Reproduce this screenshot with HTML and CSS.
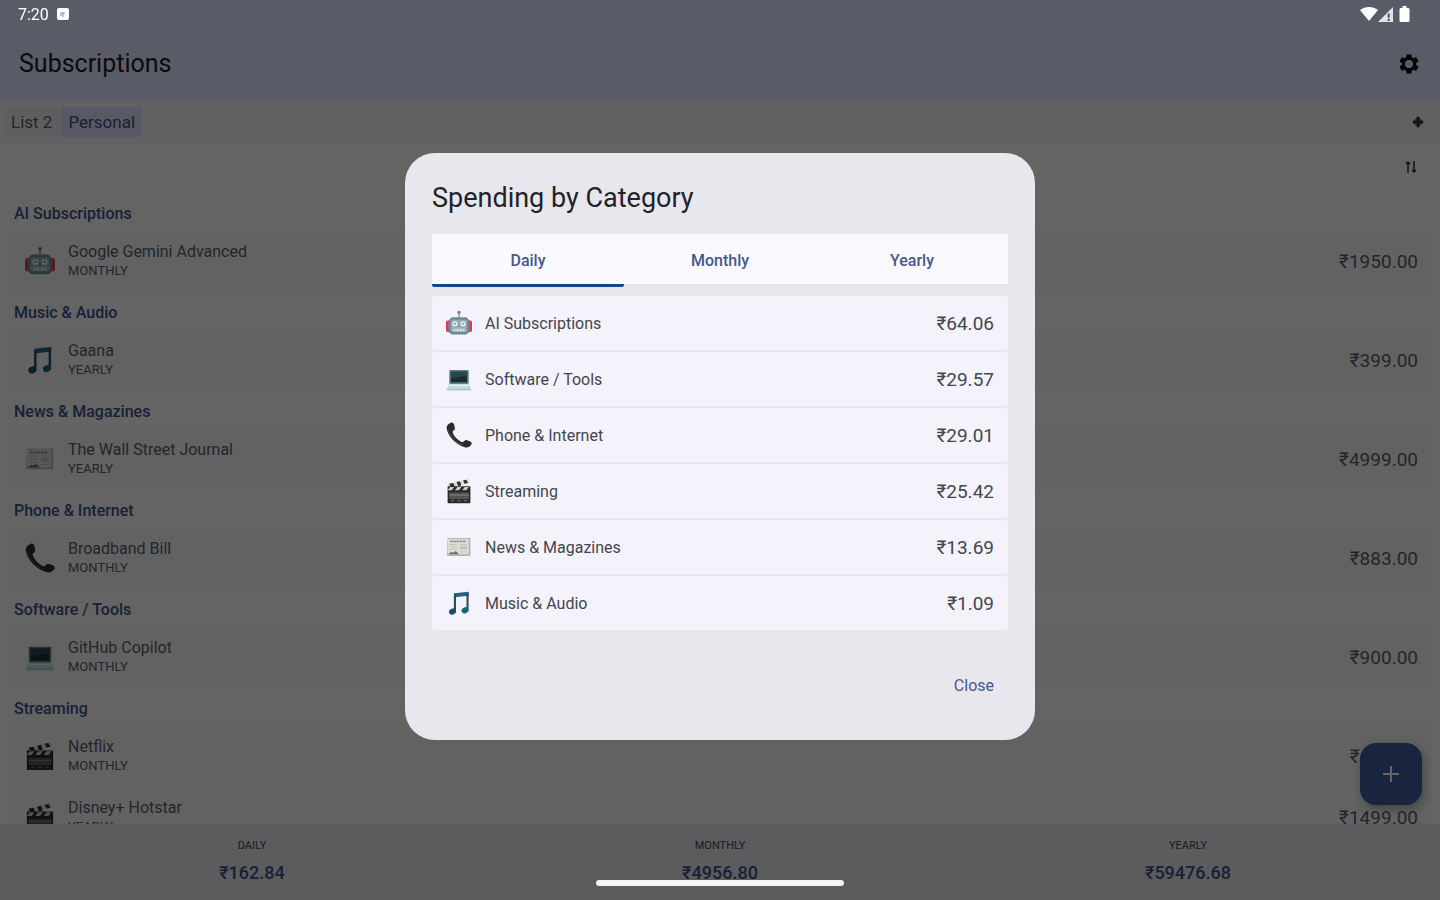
FILE: index.html
```html
<!DOCTYPE html>
<html lang="en">
<head>
    <meta charset="utf-8">
    <title>Subscriptions</title>
    <link rel="stylesheet" href="styles.css">
</head>
<body>
<!-- category icons -->
<svg class="sprite" aria-hidden="true">
    <symbol id="robot" viewBox="0 0 32 32">
        <circle cx="16" cy="3" r="2" fill="#a8685f"/>
        <path d="M16 3v7" stroke="#78909c" stroke-width="1.6"/>
        <rect x="0" y="13" width="6" height="14" rx="2" fill="#e5394b"/>
        <rect x="26" y="13" width="6" height="14" rx="2" fill="#e5394b"/>
        <path d="M7 9h18l4 4v14l-4 3H7l-4-3V13z" fill="#6f8a94"/>
        <rect x="6" y="12" width="20" height="15" rx="2" fill="#96adb5"/>
        <rect x="8" y="14" width="6" height="6" rx="2" fill="#e8f0f4"/>
        <rect x="18" y="14" width="6" height="6" rx="2" fill="#e8f0f4"/>
        <circle cx="11" cy="17" r="1.200" fill="#78929b"/>
        <circle cx="21" cy="17" r="1.200" fill="#78929b"/>
        <path d="M16 18l-1.500 3h3z" fill="#b77"/>
        <rect x="9" y="23" width="14" height="3" rx="1" fill="#dde7ea"/>
        <path d="M12 23v3M16 23v3M20 23v3" stroke="#78929b" stroke-width=".7"/>
    </symbol>
    <symbol id="music" viewBox="0 0 32 32">
        <path d="M10 4L28 2v5L10 9z" fill="#1f6484"/>
        <path d="M11 5v20M26.500 4v20" stroke="#285064" stroke-width="2.600" fill="none"/>
        <ellipse cx="8" cy="26.500" rx="4.500" ry="3.600" fill="#1c4f66" transform="rotate(-25 8 26.500)"/>
        <ellipse cx="23.500" cy="25" rx="4.500" ry="3.600" fill="#1e6470" transform="rotate(-25 23.500 25)"/>
    </symbol>
    <symbol id="news" viewBox="0 0 32 32">
        <path d="M2 5h28v22H4l-3-1z" fill="#b4b4b0"/>
        <path d="M2 6h26v19H2z" fill="#deded9"/>
        <path d="M5 9h20" stroke="#8d8d8a" stroke-width="2" stroke-dasharray="3 1"/>
        <path d="M4 13h10M4 16h10M4 19h9M17 13h9M17 22h9" stroke="#bbb" stroke-width="1"/>
        <path d="M17 15h9v4h-9z" fill="#c2c2be"/>
        <path d="M3 25l3-3 3 1 3-2 4 4z" fill="#6c6c6a"/>
    </symbol>
    <symbol id="phone" viewBox="0 0 32 32">
        <path d="M6 1c2-1 3 0 4 2l1 5c0 2-2 2-3 4 1 5 7 11 12 13 2-1 3-3 5-3l5 2c2 1 2 3 1 4-2 3-5 4-8 3C12 28 3 18 1 9 0 5 3 2 6 1z" fill="#2b2b2c"/>
        <path d="M3 10c2 8 10 16 18 18" fill="none" stroke="#555" stroke-width="1"/>
    </symbol>
    <symbol id="laptop" viewBox="0 0 32 32">
        <rect x="4" y="5" width="24" height="17" rx="1" fill="#578087"/>
        <rect x="6" y="7" width="20" height="13" fill="#1d2a30"/>
        <path d="M6 7h20v5L6 15z" fill="#28454b"/>
        <path d="M4 22h24l3 6H1z" fill="#c5d7de"/>
        <path d="M5 24h22" stroke="#edf3f5" stroke-width="1.500"/>
        <path d="M1 28h30v2H1z" fill="#a6c0c9"/>
    </symbol>
    <symbol id="clapper" viewBox="0 0 32 32">
        <path d="M2 8L28 1l1 5L3 13z" fill="#ddd"/>
        <path d="M4 7l5-1 2 5-5 1zM13 5l4-1 2 5-4 1zM21 3l4-1 2 4-4 1z" fill="#2e2e2e"/>
        <rect x="2" y="10" width="28" height="21" rx="1" fill="#2b2b2b"/>
        <path d="M5 11h5l-3 4H2zM14 11h5l-3 4h-5zM23 11h5l-3 4h-5z" fill="#ccc"/>
        <rect x="4" y="18" width="24" height="8" fill="#555"/>
        <path d="M4 21h24M6 28h4M14 28h4M22 28h4" stroke="#888" stroke-width="1"/>
    </symbol>
</svg>

<div class="screen">
    <header class="app-bar">
        <h1>Subscriptions</h1>
        <button class="icon-button" aria-label="Settings">
            <svg width="24" height="24" viewBox="0 0 24 24"><path fill="currentColor" d="M19.140 12.940c.04-.3.06-.61.06-.94s-.02-.64-.07-.94l2.030-1.580a.49.49 0 0 0 .12-.61l-1.920-3.320a.49.49 0 0 0-.59-.22l-2.390.96a7 7 0 0 0-1.620-.94l-.36-2.540a.48.48 0 0 0-.48-.41h-3.840a.48.48 0 0 0-.47.41l-.36 2.540c-.59.24-1.130.57-1.620.94l-2.390-.96a.49.49 0 0 0-.59.22L2.740 8.870a.48.48 0 0 0 .12.61l2.030 1.580c-.05.3-.09.63-.09.94s.02.64.07.94l-2.030 1.580a.49.49 0 0 0-.12.61l1.920 3.320c.12.22.37.29.59.22l2.390-.96c.5.38 1.030.7 1.620.94l.36 2.540c.05.24.24.41.48.41h3.840c.24 0 .44-.17.47-.41l.36-2.540c.59-.24 1.130-.56 1.620-.94l2.390.96c.22.08.47 0 .59-.22l1.920-3.320a.48.48 0 0 0-.12-.61zM12 16a4 4 0 1 1 0-8 4 4 0 0 1 0 8z"/></svg>
        </button>
    </header>

    <nav class="list-bar">
        <button class="chip">List 2</button>
        <button class="chip selected">Personal</button>
        <button class="icon-button add-list" aria-label="Add list">
            <svg width="12" height="12" viewBox="0 0 12 12"><path d="M6 0l6 6-6 6-6-6z" fill="#77777c"/><path d="M6 1v10M1 6h10" stroke="currentColor" stroke-width="2.500"/></svg>
        </button>
    </nav>

    <div class="sort-row">
        <button class="icon-button" aria-label="Sort">
            <svg width="12" height="14" viewBox="0 0 12 14"><path d="M3 13V2M1 4l2-2 2 2M9 1v11M7 10l2 2 2-2" fill="none" stroke="currentColor" stroke-width="1.500"/></svg>
        </button>
    </div>

    <main class="subscriptions">
        <h2>AI Subscriptions</h2>
        <div class="card">
            <svg class="emoji"><use href="#robot"/></svg>
            <div class="info"><span class="name">Google Gemini Advanced</span><span class="period">MONTHLY</span></div>
            <span class="amount">₹1950.00</span>
        </div>
        <h2>Music &amp; Audio</h2>
        <div class="card">
            <svg class="emoji"><use href="#music"/></svg>
            <div class="info"><span class="name">Gaana</span><span class="period">YEARLY</span></div>
            <span class="amount">₹399.00</span>
        </div>
        <h2>News &amp; Magazines</h2>
        <div class="card">
            <svg class="emoji"><use href="#news"/></svg>
            <div class="info"><span class="name">The Wall Street Journal</span><span class="period">YEARLY</span></div>
            <span class="amount">₹4999.00</span>
        </div>
        <h2>Phone &amp; Internet</h2>
        <div class="card">
            <svg class="emoji"><use href="#phone"/></svg>
            <div class="info"><span class="name">Broadband Bill</span><span class="period">MONTHLY</span></div>
            <span class="amount">₹883.00</span>
        </div>
        <h2>Software / Tools</h2>
        <div class="card">
            <svg class="emoji"><use href="#laptop"/></svg>
            <div class="info"><span class="name">GitHub Copilot</span><span class="period">MONTHLY</span></div>
            <span class="amount">₹900.00</span>
        </div>
        <h2>Streaming</h2>
        <div class="card">
            <svg class="emoji"><use href="#clapper"/></svg>
            <div class="info"><span class="name">Netflix</span><span class="period">MONTHLY</span></div>
            <span class="amount">₹649.00</span>
        </div>
        <div class="card">
            <svg class="emoji"><use href="#clapper"/></svg>
            <div class="info"><span class="name">Disney+ Hotstar</span><span class="period">YEARLY</span></div>
            <span class="amount">₹1499.00</span>
        </div>
    </main>

    <footer class="totals">
        <div class="total"><span class="label">DAILY</span><span class="value">₹162.84</span></div>
        <div class="total"><span class="label">MONTHLY</span><span class="value">₹4956.80</span></div>
        <div class="total"><span class="label">YEARLY</span><span class="value">₹59476.68</span></div>
    </footer>

    <button class="fab" aria-label="Add subscription">
        <svg width="18" height="18" viewBox="0 0 18 18"><path d="M9 1v16M1 9h16" stroke="currentColor" stroke-width="2"/></svg>
    </button>
</div>

<div class="scrim">
    <section class="dialog" role="dialog" aria-labelledby="dialog-title">
        <h2 id="dialog-title">Spending by Category</h2>
        <div class="tabs" role="tablist">
            <button class="tab active" role="tab" aria-selected="true">Daily</button>
            <button class="tab" role="tab" aria-selected="false">Monthly</button>
            <button class="tab" role="tab" aria-selected="false">Yearly</button>
        </div>
        <ul class="categories">
            <li><svg class="emoji"><use href="#robot"/></svg><span class="category">AI Subscriptions</span><span class="amount">₹64.06</span></li>
            <li><svg class="emoji"><use href="#laptop"/></svg><span class="category">Software / Tools</span><span class="amount">₹29.57</span></li>
            <li><svg class="emoji"><use href="#phone"/></svg><span class="category">Phone &amp; Internet</span><span class="amount">₹29.01</span></li>
            <li><svg class="emoji"><use href="#clapper"/></svg><span class="category">Streaming</span><span class="amount">₹25.42</span></li>
            <li><svg class="emoji"><use href="#news"/></svg><span class="category">News &amp; Magazines</span><span class="amount">₹13.69</span></li>
            <li><svg class="emoji"><use href="#music"/></svg><span class="category">Music &amp; Audio</span><span class="amount">₹1.09</span></li>
        </ul>
        <div class="actions">
            <button class="close">Close</button>
        </div>
    </section>
</div>

<!-- system bars stay above the scrim -->
<div class="status-bar">
    <span class="clock">7:20</span>
    <svg width="12" height="12" viewBox="0 0 12 12"><rect width="12" height="12" rx="2" fill="#fff"/><path d="M4 8V5h4M6 4v5" stroke="#999ba6" stroke-width="1.200" fill="none"/></svg>
    <svg class="wifi" width="18" height="14" viewBox="0 0 18 14"><path d="M0 3c5-4 13-4 18 0L9 14z" fill="#fff"/></svg>
    <svg width="15" height="15" viewBox="0 0 14 14"><path d="M14 0v14H0z" fill="#e4e4e8"/><path d="M10 6v4M10 11v2" stroke="#595b67" stroke-width="2"/></svg>
    <svg class="battery" width="11" height="16" viewBox="0 0 10 16"><path d="M3 0h4v2h2l1 1v12l-1 1H1l-1-1V3l1-1h2z" fill="#fff"/></svg>
</div>
<div class="nav-handle"></div>
</body>
</html>
```
FILE: styles.css
```css
* {
    box-sizing: border-box;
}

body {
    margin: 0;
    font-family: Roboto, "Noto Sans", sans-serif;
    color: #44464f;
}

h1, h2, ul {
    margin: 0;
    padding: 0;
    font-weight: 400;
}

button {
    border: none;
    padding: 0;
    background: none;
    font: inherit;
    color: inherit;
    cursor: pointer;
}

svg {
    display: block;
    flex-shrink: 0;
}

.sprite {
    position: absolute;
    width: 0;
    height: 0;
}

.screen {
    display: flex;
    flex-direction: column;
    height: 100vh;
    overflow: hidden;
    background: #f9f9fc;
}

/* top bars */
.app-bar {
    display: flex;
    flex-shrink: 0;
    align-items: center;
    justify-content: space-between;
    height: 100px;
    padding: 27px 19px 0;
    background: #dfe3ff;
}

.app-bar h1 {
    font-size: 25px;
    color: #1a1b21;
}

.icon-button {
    display: flex;
    color: #333;
}

.app-bar .icon-button {
    color: #000;
}

.list-bar {
    display: flex;
    flex-shrink: 0;
    align-items: center;
    gap: 2px;
    height: 44px;
    padding: 0 16px 0 4px;
    background: #f3f2f9;
}

.chip {
    height: 30px;
    padding: 0 7px;
    border-radius: 2px;
    background: #ecebee;
    font-size: 17px;
    color: #5c5e66;
}

.chip.selected {
    background: #d9e0fc;
    color: #3c5286;
}

.add-list {
    margin-left: auto;
}

.sort-row {
    display: flex;
    flex-shrink: 0;
    justify-content: flex-end;
    height: 49px;
    padding: 16px 23px 0;
}

/* list */
.subscriptions {
    flex: 1;
    min-height: 0;
    overflow: hidden;
    padding: 0 8px;
}

.subscriptions h2 {
    padding: 4px 6px 0;
    font-size: 16px;
    font-weight: 500;
    line-height: 34px;
    color: #3c5286;
}

.card {
    display: flex;
    align-items: center;
    gap: 13px;
    height: 60px;
    margin-bottom: 1px;
    padding: 0 14px 0 17px;
    border-radius: 4px;
    background: #f4f4f7;
    color: #5c5e66;
}

.emoji {
    width: 30px;
    height: 30px;
}

.info {
    display: flex;
    flex: 1;
    flex-direction: column;
}

.name {
    font-size: 16px;
    line-height: 20px;
}

.period {
    font-size: 13px;
    line-height: 18px;
}

.amount {
    font-size: 19px;
}

/* bottom totals */
.totals {
    display: flex;
    flex-shrink: 0;
    height: 76px;
    padding: 14px 18px 0;
    background: #e5e4ec;
}

.total {
    display: flex;
    flex: 1;
    flex-direction: column;
    align-items: center;
}

.label {
    font-size: 11px;
    line-height: 16px;
}

.value {
    font-size: 18px;
    font-weight: 500;
    line-height: 38px;
    color: #3c5286;
}

.fab {
    position: fixed;
    right: 18px;
    bottom: 95px;
    display: flex;
    align-items: center;
    justify-content: center;
    width: 62px;
    height: 62px;
    border-radius: 16px;
    background: #405c9c;
    color: #fff;
    box-shadow: 2px 4px 8px rgba(0, 0, 0, 0.3);
}

/* dialog */
.scrim {
    position: fixed;
    inset: 0;
    display: flex;
    align-items: center;
    justify-content: center;
    padding-bottom: 7px;
    background: rgba(0, 0, 0, 0.6);
}

.dialog {
    width: 630px;
    max-width: 90%;
    padding: 27px 27px 37px;
    border-radius: 30px;
    background: #e8e7ee;
}

.dialog h2 {
    font-size: 27px;
    line-height: 36px;
    color: #222329;
}

.tabs {
    display: flex;
    margin: 18px 0 9px;
    background: #faf9ff;
}

.tab {
    flex: 1;
    height: 53px;
    padding-top: 2px;
    border-bottom: 3px solid #e6e5ec;
    font-size: 16px;
    font-weight: 500;
    color: #47578c;
}

.tab.active {
    border-bottom-color: #17438a;
    border-radius: 0 0 2px 2px;
}

.categories {
    display: flex;
    flex-direction: column;
    gap: 2px;
    list-style: none;
}

.categories li {
    display: flex;
    align-items: center;
    gap: 13px;
    height: 54px;
    padding: 0 14px;
    border-radius: 3px;
    background: #f4f3fc;
}

.categories .emoji {
    width: 26px;
    height: 26px;
}

.category {
    flex: 1;
    font-size: 16px;
}

.actions {
    display: flex;
    justify-content: flex-end;
    margin-top: 37px;
}

.close {
    height: 36px;
    padding: 0 14px;
    font-size: 16px;
    color: #47578c;
}

/* system bars */
.status-bar {
    position: fixed;
    top: 0;
    left: 0;
    right: 0;
    display: flex;
    align-items: center;
    height: 28px;
    padding: 0 30px 0 18px;
    color: #fff;
}

.clock {
    margin-right: 8px;
    font-size: 16px;
}

.wifi {
    margin-left: auto;
}

.battery {
    margin-left: 6px;
}

.nav-handle {
    position: fixed;
    bottom: 14px;
    left: 50%;
    width: 248px;
    height: 6px;
    margin-left: -124px;
    border-radius: 3px;
    background: #f4f4f4;
}
```
